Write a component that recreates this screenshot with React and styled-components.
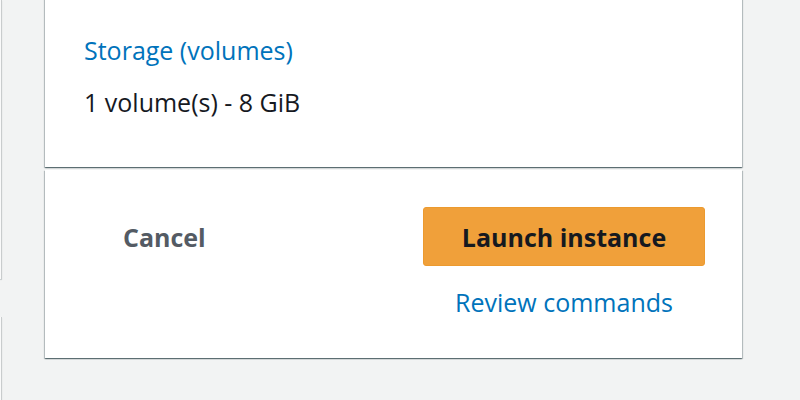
import React from 'react';
import styled, { createGlobalStyle } from 'styled-components';

const GlobalStyle = createGlobalStyle`
  html, body {
    margin: 0;
    padding: 0;
    background: #f2f3f3;
    overflow: hidden;
  }
  body {
    font-family: "Open Sans", "Noto Sans", sans-serif;
    -webkit-font-smoothing: antialiased;
  }
`;

const Page = styled.div`
  display: flex;
  height: 400px;
  overflow: hidden;
`;

const Rail = styled.div`
  display: flex;
  flex-direction: column;
  width: 2px;
  flex-shrink: 0;
`;

const RailPanel = styled.div`
  height: ${(p) => p.$height}px;
  margin-top: ${(p) => p.$gap || 0}px;
  background: #fafafa;
  border-right: 1px solid #c9cccd;
  box-shadow: 0 1px 1px rgba(0, 28, 36, 0.2);
  flex-shrink: 0;
`;

const Main = styled.div`
  margin-left: 43px;
  width: 697px;
  display: flex;
  flex-direction: column;
  gap: 3px;
`;

const Card = styled.section`
  background: #fff;
  box-shadow: 0 1px 1px 0 rgba(0, 28, 36, 0.4), 1px 1px 1px 0 rgba(0, 28, 36, 0.2),
    -1px 1px 1px 0 rgba(0, 28, 36, 0.2);
  flex-shrink: 0;
`;

const SummaryCard = styled(Card)`
  margin-top: -40px;
  height: 207px;
  box-sizing: border-box;
  padding: 74px 39px 0;
`;

const FieldLink = styled.a`
  display: block;
  color: #0073bb;
  font-size: 25px;
  line-height: 32px;
  text-decoration: none;
  cursor: pointer;
`;

const FieldValue = styled.div`
  margin-top: 20px;
  color: #16191f;
  font-size: 25px;
  line-height: 32px;
`;

const ActionCard = styled(Card)`
  height: 188px;
  box-sizing: border-box;
  display: flex;
  align-items: flex-start;
  justify-content: space-between;
  padding: 37px 37px 0 58px;
`;

const TextButton = styled.button`
  height: 59px;
  padding: 0 20px;
  border: none;
  background: transparent;
  color: #545b64;
  font-family: inherit;
  font-weight: 700;
  font-size: 25px;
  cursor: pointer;
`;

const LaunchGroup = styled.div`
  display: flex;
  flex-direction: column;
  align-items: center;
  gap: 20px;
`;

const PrimaryButton = styled.button`
  width: 282px;
  height: 59px;
  border: 1px solid #ec9a2f;
  border-radius: 3px;
  background: #f0a03a;
  color: #16191f;
  font-family: inherit;
  font-weight: 700;
  font-size: 25px;
  cursor: pointer;
`;

const ReviewLink = styled.a`
  color: #0073bb;
  font-size: 25px;
  line-height: 32px;
  text-decoration: none;
  cursor: pointer;
`;

export default function App() {
  return (
    <>
      <GlobalStyle />
      <Page>
        <Rail>
          <RailPanel $height={279} />
          <RailPanel $height={120} $gap={38} />
        </Rail>
        <Main>
          <SummaryCard>
            <FieldLink>Storage (volumes)</FieldLink>
            <FieldValue>1 volume(s) - 8 GiB</FieldValue>
          </SummaryCard>
          <ActionCard>
            <TextButton>Cancel</TextButton>
            <LaunchGroup>
              <PrimaryButton>Launch instance</PrimaryButton>
              <ReviewLink>Review commands</ReviewLink>
            </LaunchGroup>
          </ActionCard>
        </Main>
      </Page>
    </>
  );
}
